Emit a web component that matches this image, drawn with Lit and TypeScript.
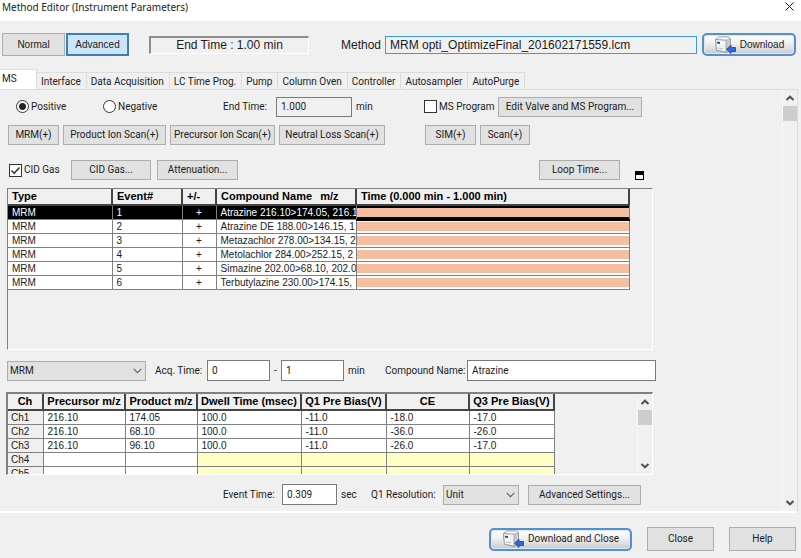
import { LitElement, html, css, svg, nothing } from "lit";
import { customElement, property } from "lit/decorators.js";

const TABS = ["MS", "Interface", "Data Acquisition", "LC Time Prog.", "Pump", "Column Oven", "Controller", "Autosampler", "AutoPurge"];

const EVENTS = [
  "Atrazine 216.10>174.05, 216.1",
  "Atrazine DE 188.00>146.15, 1",
  "Metazachlor 278.00>134.15, 2",
  "Metolachlor 284.00>252.15, 2",
  "Simazine 202.00>68.10, 202.0",
  "Terbutylazine 230.00>174.15,",
];

const CHANNEL_HEADS = ["Ch", "Precursor m/z", "Product m/z", "Dwell Time (msec)", "Q1 Pre Bias(V)", "CE", "Q3 Pre Bias(V)"];

const CHANNELS = [
  ["Ch1", "216.10", "174.05", "100.0", "-11.0", "-18.0", "-17.0"],
  ["Ch2", "216.10", "68.10", "100.0", "-11.0", "-36.0", "-26.0"],
  ["Ch3", "216.10", "96.10", "100.0", "-11.0", "-26.0", "-17.0"],
  ["Ch4", "", "", "", "", "", ""],
  ["Ch5", "", "", "", "", "", ""],
];

const controls = css`
  * { box-sizing: border-box; }
  button, input, select { font: inherit; color: inherit; margin: 0; border-radius: 0; }
  button {
    height: 20px; padding: 0; border: 1px solid #adadad; background: #e1e1e1;
    white-space: nowrap; line-height: 16px;
  }
`;

@customElement("scroll-rail")
class ScrollRail extends LitElement {
  static styles = css`
    :host { display: flex; flex-direction: column; align-items: center; width: 15px; background: #f0f0f0; border-left: 1px solid #f7f7f7; }
    button { all: unset; display: flex; align-items: center; justify-content: center; width: 14px; height: 16px; }
    .thumb { width: 14px; height: 15px; background: #cdcdcd; }
    .space { flex: 1; }
    path { fill: none; stroke: #505050; stroke-width: 2; }
  `;
  render() {
    return html`
      <button aria-label="Scroll up"><svg width="10" height="6" viewBox="0 0 10 6"><path d="M1.5 5 5 1.7 8.5 5" /></svg></button>
      <div class="thumb"></div>
      <div class="space"></div>
      <button aria-label="Scroll down"><svg width="10" height="6" viewBox="0 0 10 6"><path d="M1.5 1 5 4.3 8.5 1" /></svg></button>
    `;
  }
}

@customElement("download-button")
class DownloadButton extends LitElement {
  @property() label = "";
  static styles = [controls, css`
    :host { display: block; }
    button {
      display: flex; align-items: center; justify-content: center; gap: 4px;
      width: 100%; height: 23px; border: 2px solid #568fd0; border-radius: 5px;
      background: linear-gradient(#fff, #f1f1f1 40%, #dcdcdc 75%, #c6c6c6);
      box-shadow: inset 0 0 0 1px #dbe8f6; line-height: 18px;
    }
  `];
  render() {
    return html`<button>
      <svg width="22" height="18" viewBox="0 0 22 18" aria-hidden="true">
        <path d="M1.5 3.5 5 1h9.5l2 1.5v11L12 16.5 2.5 14z" fill="#c9cbcd" stroke="#8b8f94" stroke-width=".8" />
        <path d="M1.5 3.5 5 1h9.5l2 1.5-4.5 1.8z" fill="#f4f5f6" stroke="#9a9ea3" stroke-width=".6" />
        <path d="M1.5 3.5 12 4.3v12L2.5 14z" fill="#f1f3f4" stroke="#8b8f94" stroke-width=".7" />
        <path d="M3 5.8l3 .3v1.8l-3-.3z" fill="#23536f" />
        <path d="M4 12l5 .8" stroke="#b9bdc1" />
        <path d="M12.5 13.2l4.500-4v2.300h4.500v4H17V17.500z" fill="#2b6be0" stroke="#1b3f9e" stroke-width=".8" />
      </svg>
      <span>${this.label}</span>
    </button>`;
  }
}

@customElement("drop-down")
class DropDown extends LitElement {
  @property() value = "";
  @property() name = "";
  static styles = [controls, css`
    :host { display: grid; align-items: center; }
    select {
      grid-area: 1 / 1; appearance: none; width: 100%; height: 20px; padding: 0 20px 0 2px;
      border: 1px solid #adadad; background: #e1e1e1;
    }
    svg { grid-area: 1 / 1; justify-self: end; margin-right: 4px; pointer-events: none; }
  `];
  render() {
    return html`
      <select aria-label=${this.name}><option>${this.value}</option></select>
      <svg width="9" height="6" viewBox="0 0 9 6"><path d="M.7 .9 4.5 4.7 8.3 .9" fill="none" stroke="#606060" stroke-width="1.1" /></svg>
    `;
  }
}

@customElement("app-root")
class AppRoot extends LitElement {
  static styles = [controls, css`
    :host {
      display: flex; flex-direction: column; min-height: 100vh; background: #f0f0f0; color: #1c1c1c;
      font: 10px/14px Roboto, "Noto Sans", sans-serif;
    }
    .title {
      display: flex; justify-content: space-between; align-items: center; height: 21px;
      padding: 0 7px 8px 2px; background: #fff; font-family: "Noto Sans", sans-serif;
    }
    .title h1 { margin: 0; font: inherit; }
    .title button { display: flex; align-items: center; height: 12px; border: 0; background: none; }

    .toolbar { display: flex; align-items: center; padding: 12px 5px 0 2px; font-family: "Liberation Sans", sans-serif; }
    .mode { flex: none; width: 63px; height: 23px; margin-right: 1px; }
    .mode.on { border: 2px solid #3c7fb8; background: #cce4f7; }
    .readout {
      flex: none; width: 160px; height: 18px; margin: 0 32px 0 19px; border: solid; border-width: 2px 1px 1px 2px;
      border-color: #8c8c8c #fff #fff #8c8c8c; font-size: 12px; text-align: center;
    }
    .toolbar label { font-size: 12px; margin-right: 4px; }
    .method { flex: 1; min-width: 0; height: 18px; margin-right: 5px; padding: 0 4px; border: 1px solid #3d9be0; background: #f0f0f0; font-size: 12px; }
    .toolbar download-button { flex: none; width: 94px; }

    .tabs { display: flex; align-items: flex-end; margin-top: 13px; height: 20px; }
    .tabs a {
      height: 17px; padding: 0 5px 0 4px; border: 1px solid #dcdcdc; border-width: 1px 1px 0 0;
      color: inherit; text-decoration: none; line-height: 17px; white-space: nowrap;
    }
    .tabs a.on { width: 37px; height: 20px; padding: 0 2px; background: #fff; }

    .panel { display: flex; margin-right: 3px; border: 1px solid #dcdcdc; border-width: 1px 1px 2px 0; border-bottom-color: #fff; }
    .body { flex: 1; min-width: 0; padding: 6px 129px 6px 7px; }
    .row { display: grid; align-items: center; white-space: nowrap; }
    .run { grid-template-columns: 87px 120px 53px 76px 72px 74px 144px; padding-left: 9px; height: 21px; }
    .scans { grid-template-columns: 51px 103px 105px 106px 87px 50px; column-gap: 4px; margin-top: 8px; padding-left: 1px; }
    .sim { margin-left: 36px; }
    .gas { grid-template-columns: 62px 80px 6px 81px 1fr 81px 15px 9px; margin-top: 15px; padding: 0 9px 0 2px; }
    .att { grid-column: 4; }
    .loop { grid-column: 6; }
    .window { grid-column: 8; padding: 0; height: 9px; border: 1px solid #000; border-top-width: 4px; background: #fff; align-self: end; }
    .acq { grid-template-columns: 139px 61px 63px 11px 63px 41px 82px 1fr; margin: 10px -3px 0 0; }
    .lead { padding-left: 9px; }
    .dash { text-align: center; }
    .event { grid-template-columns: 59px 55px 34px 72px 76px 9px 113px; margin-top: 9px; padding-left: 216px; }
    .settings { grid-column: 7; }
    .tick { display: flex; align-items: center; gap: 2px; }
    .tick input { appearance: none; width: 13px; height: 13px; border: 1px solid #333; background: #fff; }
    .tick .radio { border-radius: 50%; }
    .tick .radio:checked { background: radial-gradient(circle, #222 3px, #fff 4px); }
    .box { display: grid; }
    .box input, .box svg { grid-area: 1 / 1; }
    .box svg { pointer-events: none; z-index: 1; }
    .text { width: 100%; height: 21px; padding: 0 4px; border: 1px solid #7a7a7a; background: #fff; }
    .text.flat { height: 20px; background: #f0f0f0; }
    .unit { padding-left: 4px; }

    .frame { border: 1px solid #fff; border-top: 1px solid #808080; border-left: 1px solid #808080; }
    table { border-collapse: collapse; table-layout: fixed; font: 10px/13px "Liberation Sans", sans-serif; }
    th, td { padding: 0; height: 14px; overflow: hidden; white-space: nowrap; text-align: left; }
    th { height: 16px; font-size: 11px; color: #000; background: #f0f0f0; border-right: 2px solid #444; border-bottom: 2px solid #444; }
    td { border-right: 1px solid #808080; border-bottom: 1px solid #808080; background: #fff; }
    .events { margin-top: 8px; min-height: 162px; padding-right: 22px; }
    .events table { width: 100%; }
    .events th, .events td { padding-left: 4px; }
    .events .sign { text-align: center; padding: 0; }
    .events .bar { padding: 0; }
    .mz { padding-left: 5px; }
    .lane { height: 9px; background: #f6bea0; }
    .sel td { background: #000; color: #fff; }
    .sel .bar { border-bottom: 2px solid #000; }

    .channels { display: flex; justify-content: space-between; height: 83px; margin: 11px 0 0 -1px; overflow: hidden; border-width: 2px 1px 1px 2px; }
    .channels div { overflow: hidden; }
    .channels table { width: 546px; }
    .channels th { text-align: center; }
    .channels td { padding-left: 4px; }
    .channels .ch { padding-left: 3px; background: #f0f0f0; }
    .channels .off { background: #ffffc4; }

    .footer { display: flex; justify-content: flex-end; align-items: center; gap: 15px; padding: 14px 5px 7px; }
    .footer button { width: 67px; height: 24px; }
    .footer download-button { width: 143px; }
  `];

  private tick(label: string, type: string, checked: boolean) {
    return html`<label class="tick"><span class="box"><input class=${type} type=${type} name=${type === "radio" ? "polarity" : label} .checked=${checked} />
      ${type === "checkbox" && checked ? html`<svg width="13" height="13" viewBox="0 0 13 13">${svg`<path d="M2.5 6.5 5.2 9.3 10.5 3.5" fill="none" stroke="#222" stroke-width="1.3" />`}</svg>` : nothing}</span>${label}</label>`;
  }

  render() {
    return html`
      <header class="title">
        <h1>Method Editor (Instrument Parameters)</h1>
        <button aria-label="Close window"><svg width="9" height="9" viewBox="0 0 9 9"><path d="M.5 .5l8 8M8.5 .5l-8 8" stroke="#222" /></svg></button>
      </header>

      <div class="toolbar">
        <button class="mode">Normal</button>
        <button class="mode on">Advanced</button>
        <div class="readout">End Time : 1.00 min</div>
        <label for="method">Method</label>
        <input id="method" class="method" value="MRM opti_OptimizeFinal_201602171559.lcm" />
        <download-button label="Download"></download-button>
      </div>

      <nav class="tabs">${TABS.map((t, i) => html`<a href="#" class=${i ? "" : "on"}>${t}</a>`)}</nav>

      <main class="panel">
        <div class="body">
          <div class="row run">
            ${this.tick("Positive", "radio", true)}
            ${this.tick("Negative", "radio", false)}
            <label for="end">End Time:</label>
            <input id="end" class="text flat" value="1.000" />
            <span class="unit">min</span>
            ${this.tick("MS Program", "checkbox", false)}
            <button>Edit Valve and MS Program...</button>
          </div>

          <div class="row scans">
            <button>MRM(+)</button>
            <button>Product Ion Scan(+)</button>
            <button>Precursor Ion Scan(+)</button>
            <button>Neutral Loss Scan(+)</button>
            <button class="sim">SIM(+)</button>
            <button>Scan(+)</button>
          </div>

          <div class="row gas">
            ${this.tick("CID Gas", "checkbox", true)}
            <button>CID Gas...</button>
            <button class="att">Attenuation...</button>
            <button class="loop">Loop Time...</button>
            <button class="window" aria-label="Maximize table"></button>
          </div>

          <div class="frame events">
            <table>
              <colgroup><col width="104" /><col width="70" /><col width="34" /><col width="140" /><col /></colgroup>
              <thead><tr><th>Type</th><th>Event#</th><th>+/-</th><th>Compound Name <span class="mz">m/z</span></th><th>Time (0.000 min - 1.000 min)</th></tr></thead>
              <tbody>${EVENTS.map((name, i) => html`<tr class=${i ? "" : "sel"}>
                <td>MRM</td><td>${i + 1}</td><td class="sign">+</td><td>${name}</td><td class="bar"><div class="lane"></div></td>
              </tr>`)}</tbody>
            </table>
          </div>

          <div class="row acq">
            <drop-down value="MRM" name="Event type"></drop-down>
            <label class="lead" for="from">Acq. Time:</label>
            <input id="from" class="text" value="0" />
            <label class="dash" for="to">-</label>
            <input id="to" class="text" value="1" />
            <span class="unit">min</span>
            <label for="compound">Compound Name:</label>
            <input id="compound" class="text" value="Atrazine" />
          </div>

          <div class="frame channels">
            <div><table>
              <colgroup><col width="35" /><col width="82" /><col width="72" /><col width="104" /><col width="85" /><col width="83" /><col width="85" /></colgroup>
              <thead><tr>${CHANNEL_HEADS.map((h) => html`<th>${h}</th>`)}</tr></thead>
              <tbody>${CHANNELS.map((row) => html`<tr>${row.map((v, c) => html`<td class=${c === 0 ? "ch" : c > 2 && !v ? "off" : ""}>${v}</td>`)}</tr>`)}</tbody>
            </table></div>
            <scroll-rail></scroll-rail>
          </div>

          <div class="row event">
            <label for="time">Event Time:</label>
            <input id="time" class="text" value="0.309" />
            <span class="unit">sec</span>
            <span>Q1 Resolution:</span>
            <drop-down value="Unit" name="Q1 Resolution"></drop-down>
            <button class="settings">Advanced Settings...</button>
          </div>
        </div>
        <scroll-rail></scroll-rail>
      </main>

      <footer class="footer">
        <download-button label="Download and Close"></download-button>
        <button>Close</button>
        <button>Help</button>
      </footer>
    `;
  }
}
